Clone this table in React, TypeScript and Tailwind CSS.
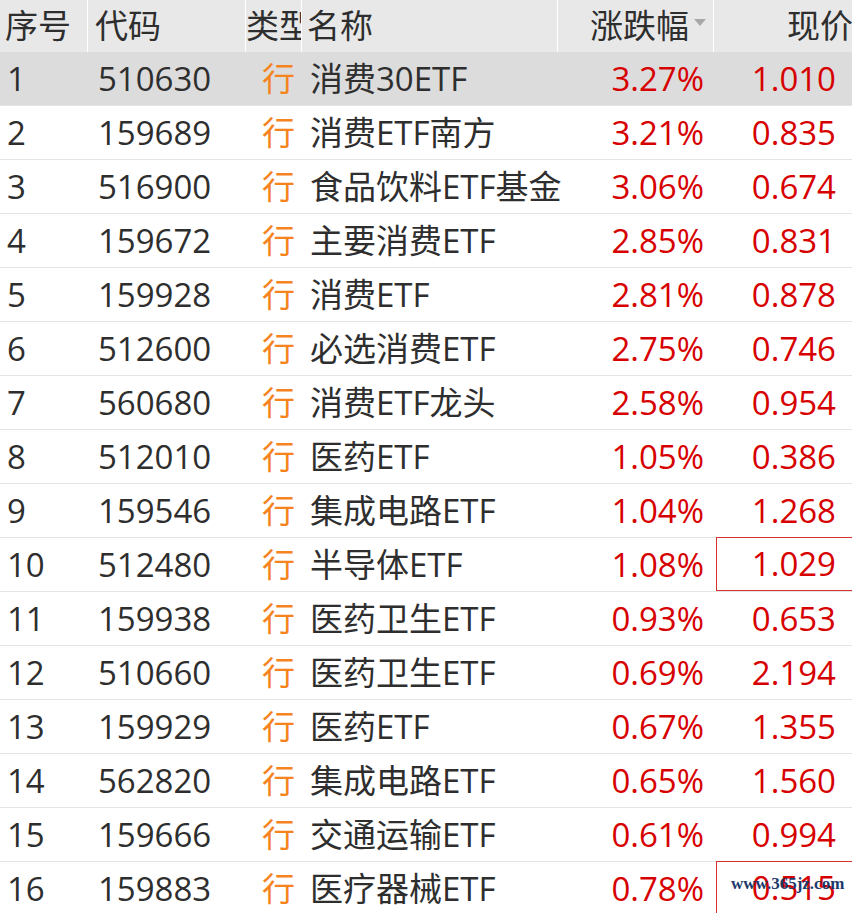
import React from "react";

const rows: [string, string, string, string, string, boolean?][] = [
  ["1", "510630", "消费30ETF", "3.27%", "1.010"],
  ["2", "159689", "消费ETF南方", "3.21%", "0.835"],
  ["3", "516900", "食品饮料ETF基金", "3.06%", "0.674"],
  ["4", "159672", "主要消费ETF", "2.85%", "0.831"],
  ["5", "159928", "消费ETF", "2.81%", "0.878"],
  ["6", "512600", "必选消费ETF", "2.75%", "0.746"],
  ["7", "560680", "消费ETF龙头", "2.58%", "0.954"],
  ["8", "512010", "医药ETF", "1.05%", "0.386"],
  ["9", "159546", "集成电路ETF", "1.04%", "1.268"],
  ["10", "512480", "半导体ETF", "1.08%", "1.029", true],
  ["11", "159938", "医药卫生ETF", "0.93%", "0.653"],
  ["12", "510660", "医药卫生ETF", "0.69%", "2.194"],
  ["13", "159929", "医药ETF", "0.67%", "1.355"],
  ["14", "562820", "集成电路ETF", "0.65%", "1.560"],
  ["15", "159666", "交通运输ETF", "0.61%", "0.994"],
  ["16", "159883", "医疗器械ETF", "0.78%", "0.515", true],
];

const font = { fontFamily: '"Open Sans", "Noto Sans CJK SC", sans-serif' };

export default function App() {
  return (
    <div
      className="relative w-[852px] h-[913px] overflow-hidden bg-white text-[33px] text-[#2e2e2e]"
      style={font}
    >
      <div className="grid grid-cols-[88px_158px_56px_255px_157px_138px] h-[52px] bg-[#e8e8e8]">
        <div className="pl-[5px] flex items-center border-r border-white overflow-hidden whitespace-nowrap">序号</div>
        <div className="pl-[7px] flex items-center border-r border-white overflow-hidden whitespace-nowrap">代码</div>
        <div className="pl-[0px] flex items-center border-r border-white overflow-hidden whitespace-nowrap">类型</div>
        <div className="pl-[5px] flex items-center overflow-hidden whitespace-nowrap">名称</div>
        <div className="relative pr-[24px] flex items-center justify-end border-l border-r border-white whitespace-nowrap">
          涨跌幅
          <span className="absolute right-[7px] top-[19px] w-0 h-0 border-l-[6px] border-r-[6px] border-t-[7px] border-l-transparent border-r-transparent border-t-[#a8a8a8]" />
        </div>
        <div className="flex items-center justify-start pl-[73px] overflow-hidden whitespace-nowrap">现价</div>
      </div>
      {rows.map((r, i) => (
        <div
          key={i}
          className={`grid grid-cols-[88px_158px_56px_255px_157px_138px] h-[54px] border-b border-[#e4e4e4] ${i === 0 ? "bg-[#dcdcdc]" : "bg-white"}`}
        >
          <div className="pl-[7px] flex items-center whitespace-nowrap">{r[0]}</div>
          <div className="pl-[10px] flex items-center whitespace-nowrap">{r[1]}</div>
          <div className="pl-[16px] flex items-center text-[#f5841f] whitespace-nowrap">行</div>
          <div className="pl-[8px] flex items-center whitespace-nowrap">{r[2]}</div>
          <div className="pr-[10px] flex items-center justify-end text-[#d70000] whitespace-nowrap">{r[3]}</div>
          <div
            className={`pr-[16px] flex items-center justify-end text-[#d70000] whitespace-nowrap ${r[5] ? "ml-[2px] border-l border-t border-b border-[#d93030] -mt-[1px]" : ""}`}
          >
            {r[4]}
          </div>
        </div>
      ))}
      <div
        className="absolute left-[731px] top-[871px] text-[17px] leading-[25px] text-[#1d3a6d]"
        style={{ fontFamily: '"Liberation Serif", "DejaVu Serif", serif', fontWeight: 700 }}
      >
        www.365jz.com
      </div>
    </div>
  );
}
